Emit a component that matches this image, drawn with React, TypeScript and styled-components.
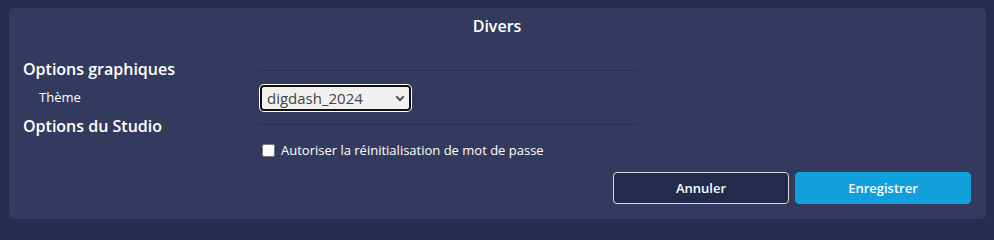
import React from "react";
import styled, {createGlobalStyle} from "styled-components";

const GlobalStyle = createGlobalStyle`
    html, body {
        margin: 0;
        padding: 0;
        background: #262c4d;
        font-family: "Open Sans", "Noto Sans", sans-serif;
        color: #ffffff;
    }
`;

const Page = styled.div`
    width: 994px;
    height: 225px;
    padding: 8px 0 0 9px;
    box-sizing: border-box;
`;

const Panel = styled.div`
    width: 977px;
    height: 211px;
    box-sizing: border-box;
    background: #343a5e;
    border-radius: 5px;
    padding: 0 15px 15px 14px;
    display: flex;
    flex-direction: column;
`;

const Title = styled.div`
    height: 36px;
    line-height: 36px;
    text-align: center;
    font-size: 16px;
    font-weight: 600;
    margin-bottom: 13px;
`;

const Form = styled.div`
    display: grid;
    grid-template-columns: 235px 380px;
    grid-template-rows: 24px 33px 24px 24px;
`;

const SectionTitle = styled.div`
    font-size: 16px;
    font-weight: 600;
    line-height: 24px;
`;

const Rule = styled.div<{ $offset: number }>`
    align-self: start;
    margin-top: ${p => p.$offset}px;
    height: 1px;
    background: #2a2f52;
`;

const Label = styled.div`
    font-size: 13px;
    line-height: 33px;
    padding-left: 16px;
`;

const Cell = styled.div`
    display: flex;
    align-items: center;
`;

const SelectWrap = styled.div`
    position: relative;
    margin-left: 2px;
`;

const Select = styled.select`
    appearance: none;
    width: 151px;
    height: 26px;
    box-sizing: border-box;
    border: 2px solid #101010;
    border-radius: 4px;
    box-shadow: 0 0 0 1px #ffffff;
    background: #f0f0f0;
    color: #444;
    font-family: "Open Sans", "Noto Sans", sans-serif;
    font-size: 15px;
    padding: 0 0 0 5px;
    outline: none;
`;

const Chevron = styled.svg`
    position: absolute;
    right: 6px;
    top: 10px;
    pointer-events: none;
`;

const CheckLabel = styled.label`
    display: flex;
    align-items: center;
    font-size: 13px;
    margin-left: 1px;
    input {
        margin: 0 6px 0 3px;
        width: 13px;
        height: 13px;
    }
`;

const Footer = styled.div`
    margin-top: auto;
    display: flex;
    justify-content: flex-end;
    gap: 6px;
`;

const Button = styled.button<{ $primary?: boolean }>`
    width: 176px;
    height: 32px;
    box-sizing: border-box;
    border-radius: 4px;
    font-family: "Open Sans", "Noto Sans", sans-serif;
    font-size: 13px;
    font-weight: 600;
    color: #ffffff;
    background: ${p => p.$primary ? "#12a0dc" : "#242a4c"};
    border: 1px solid ${p => p.$primary ? "#12a0dc" : "#d8d8d8"};
`;

export default function App() {
    return (
        <>
            <GlobalStyle/>
            <Page>
                <Panel>
                    <Title>Divers</Title>
                    <Form>
                        <SectionTitle>Options graphiques</SectionTitle>
                        <Rule $offset={13}/>
                        <Label>Thème</Label>
                        <Cell>
                            <SelectWrap>
                                <Select defaultValue="digdash_2024">
                                    <option value="digdash_2024">digdash_2024</option>
                                </Select>
                                <Chevron width="10" height="7" viewBox="0 0 10 7">
                                    <path d="M1.2 1.2 L5 5 L8.8 1.2" fill="none" stroke="#555" strokeWidth="2"/>
                                </Chevron>
                            </SelectWrap>
                        </Cell>
                        <SectionTitle>Options du Studio</SectionTitle>
                        <Rule $offset={10}/>
                        <div/>
                        <Cell>
                            <CheckLabel>
                                <input type="checkbox"/>
                                Autoriser la réinitialisation de mot de passe
                            </CheckLabel>
                        </Cell>
                    </Form>
                    <Footer>
                        <Button>Annuler</Button>
                        <Button $primary>Enregistrer</Button>
                    </Footer>
                </Panel>
            </Page>
        </>
    );
}
